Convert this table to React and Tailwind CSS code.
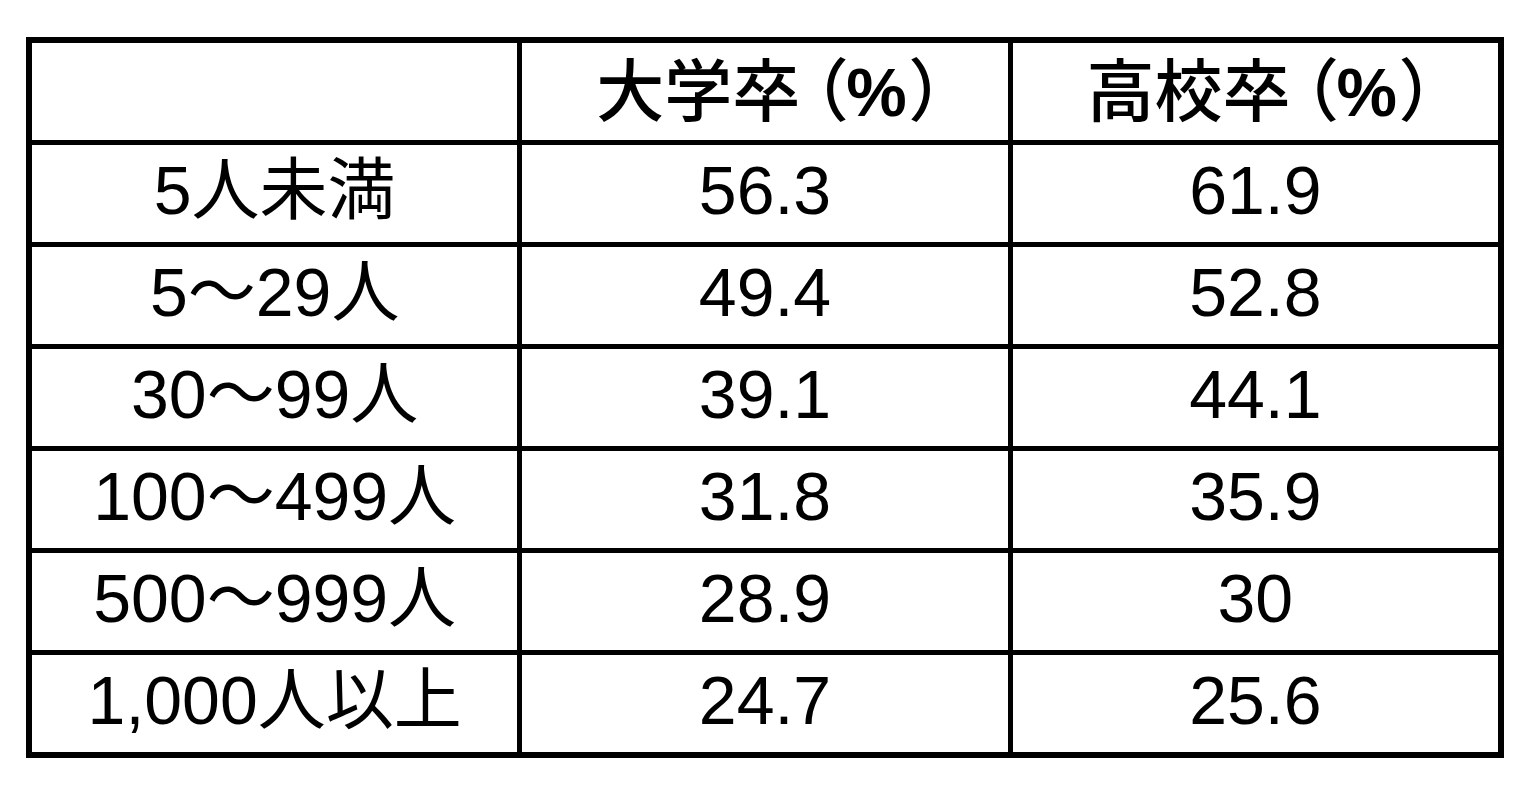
import React from "react";

const rows = [
  ["5人未満", "56.3", "61.9"],
  ["5〜29人", "49.4", "52.8"],
  ["30〜99人", "39.1", "44.1"],
  ["100〜499人", "31.8", "35.9"],
  ["500〜999人", "28.9", "30"],
  ["1,000人以上", "24.7", "25.6"],
];

const font = "font-['Liberation_Sans','Noto_Sans_CJK_JP',sans-serif]";

function Head({ label }) {
  return (
    <div className="bg-white flex items-center justify-center text-[68px] leading-none font-medium [font-feature-settings:'palt'] pl-[11px]">
      <span>{label}</span>
      <span className="ml-[12px]">（</span>
      <span className="font-bold">%</span>
      <span className="ml-[4px]">）</span>
    </div>
  );
}

export default function App() {
  return (
    <div className={`w-[1528px] h-[792px] bg-white pt-[37px] pl-[26px] ${font} text-black`}>
      <div className="w-[1478px] bg-black p-[6px] grid grid-cols-3 gap-[5px] auto-rows-[97px]">
        <div className="bg-white" />
        <Head label="大学卒" />
        <Head label="高校卒" />
        {rows.map((r) =>
          r.map((c, i) => (
            <div
              key={r[0] + i}
              className="bg-white flex items-center justify-center text-[68px] leading-none pb-[8px]"
            >
              {c}
            </div>
          ))
        )}
      </div>
    </div>
  );
}
